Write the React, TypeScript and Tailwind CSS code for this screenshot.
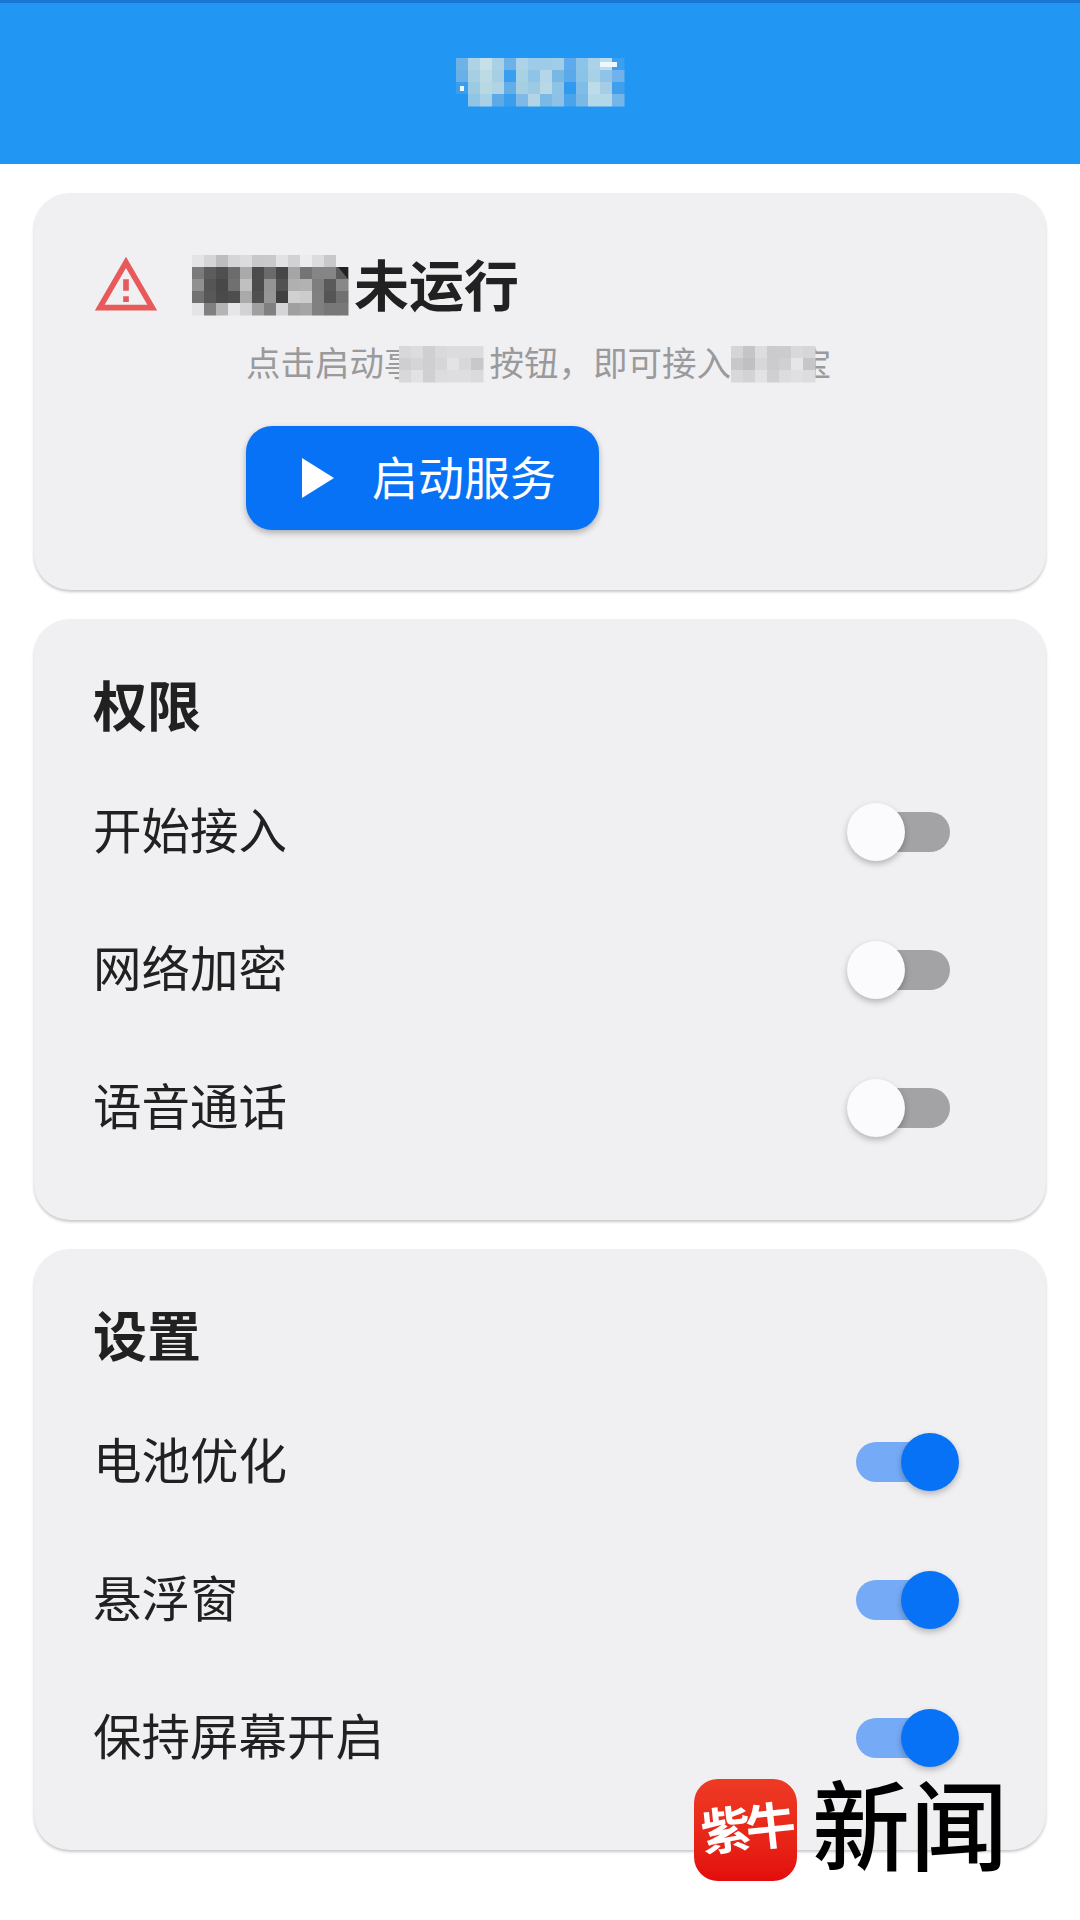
import React from "react";

const FONT = "font-['Roboto','Noto_Sans_CJK_SC',sans-serif]";

const TITLE_MOSAIC = [
  ["#6fb2e6", "#aed3e6", "#c6dfe8", "#a9d1e6", "#6cb2e8", "#aed3e8", "#9ecbe8", "#9ecbe8", "#a0cde8", "#5eaaea", "#8cc3e8", "#acd2e8", "#b8dcf0", "#3a9ff0"],
  ["#6ab0e8", "#a5cfe2", "#bcdbe4", "#a6cfe4", "#3a9eee", "#a9d1e4", "#8fc4e6", "#b5d6e8", "#7ab8e4", "#5aa9ea", "#8bc3e8", "#a8d0e6", "#8fc4e8", "#6fb3ea"],
  ["#3a9eee", "#9ccae0", "#b8d9e4", "#b0d4e4", "#64aee8", "#a6cfe2", "#9cc9e4", "#b8d8e6", "#8fc3e6", "#2f9af0", "#7fbce8", "#bcdce8", "#a5cee6", "#3f9fee"],
  ["#2196f3", "#90c5e6", "#a8d1e8", "#5caae8", "#3a9eee", "#7fbae6", "#b2d5e6", "#7ab8e6", "#8dc2e6", "#4aa4ec", "#7ab8e8", "#b5d8e8", "#b5d8e8", "#74b6e8"],
];

const HEADING_MOSAIC = [
  ["#e4e4e6", "#d5d5d7", "#bdbdbf", "#d5d5d7", "#dcdcde", "#c8c8ca", "#c9c9cb", "#e2e2e4", "#d2d2d4", "#ececee", "#dcdcde", "#c8c8ca", "#f0f0f3"],
  ["#7a7a7a", "#5c5c5c", "#4f4f4f", "#6c6c6c", "#aaaaaa", "#4b4b4b", "#6a6a6a", "#474747", "#a5a5a5", "#747474", "#858585", "#858585", "#5c5c5c"],
  ["#909090", "#555555", "#484848", "#707070", "#c0c0c0", "#4c4c4c", "#949494", "#525252", "#b0b0b0", "#b2b2b2", "#7e7e7e", "#5a5a5a", "#888888"],
  ["#727272", "#585858", "#4a4a4a", "#4e4e4e", "#aaaaaa", "#505050", "#969696", "#404040", "#d0d0d0", "#cccccc", "#808080", "#555555", "#707070"],
  ["#e4e4e6", "#808080", "#b5b5b5", "#e6e6e8", "#d2d2d4", "#a0a0a0", "#808080", "#d5d5d7", "#a0a0a0", "#a5a5a5", "#808080", "#787878", "#787878"],
];

const SUB_MOSAIC_A = [
  ["#d8d8da", "#dcdcde", "#cfcfd1", "#d9d9db", "#dcdcde", "#dcdcde", "#dcdcde"],
  ["#cfcfd1", "#d5d5d7", "#cfcfd1", "#d6d6d8", "#e3e3e5", "#d8d8da", "#c8c8ca"],
  ["#d8d8da", "#e2e2e4", "#d0d0d2", "#dcdcde", "#dedee0", "#dedee0", "#dadadc"],
];

const SUB_MOSAIC_B = [
  ["#d5d5d7", "#c5c5c7", "#dddddf", "#cbcbcd", "#ccccce", "#d9d9db", "#d6d6d8"],
  ["#c8c8ca", "#c0c0c2", "#d7d7d9", "#ccccce", "#d0d0d2", "#e6e6e8", "#c6c6c8"],
  ["#d8d8da", "#d3d3d5", "#e2e2e4", "#d0d0d2", "#dcdcde", "#e0e0e2", "#dddddf"],
];

const Mosaic = ({ rows, className, children }: { rows: string[][]; className?: string; children?: React.ReactNode }) => (
  <svg
    width={rows[0].length * 12}
    height={rows.length * 12}
    viewBox={`0 0 ${rows[0].length * 12} ${rows.length * 12}`}
    className={`overflow-visible ${className ?? ""}`}
  >
    {rows.map((row, y) =>
      row.map((fill, x) => <rect key={x} x={x * 12} y={y * 12} width="12.5" height="12.5" fill={fill} />)
    )}
    {children}
  </svg>
);

const Switch = ({ on }: { on: boolean }) => (
  <div className={`relative w-[94px] h-[40px] rounded-full mr-[36px] ${on ? "bg-[#75abf6]" : "bg-[#a3a3a5]"}`}>
    <div
      className={`absolute top-[-9px] w-[58px] h-[58px] rounded-full shadow-[0_3px_6px_rgba(0,0,0,0.25)] ${
        on ? "right-[-9px] bg-[#0872f6]" : "left-[-9px] bg-[#fbfbfd]"
      }`}
    />
  </div>
);

const Section = ({ title, items, on }: { title: string; items: string[]; on: boolean }) => (
  <div className="bg-[#f0f0f3] rounded-[36px] shadow-[0_2px_3px_rgba(0,0,0,0.22)] pl-[59px] pr-[60px] pt-[60px] pb-[43px]">
    <h2 className="h-[60px] leading-[60px] text-[54px] font-bold text-[#212121]">{title}</h2>
    <div className="mt-[24px] flex flex-col">
      {items.map((item) => (
        <div key={item} className="h-[138px] flex items-center justify-between">
          <span className="text-[48.5px] leading-[60px] pt-[2px] text-[#212121]">{item}</span>
          <Switch on={on} />
        </div>
      ))}
    </div>
  </div>
);

export default function App() {
  return (
    <div className={`relative w-[1080px] h-[1920px] bg-white overflow-hidden ${FONT}`}>
      <header className="h-[164px] bg-[#2196f3] border-t-[3px] border-[#1976d2] flex items-center justify-center">
        <Mosaic rows={TITLE_MOSAIC} className="mt-[-3px]">
          <rect x="144" y="4" width="17" height="5" fill="#eef8fc" />
          <rect x="4" y="28" width="4" height="5" fill="#eef8fc" />
        </Mosaic>
      </header>

      <main className="px-[34px] pt-[29px] flex flex-col gap-[29px]">
        <div className="bg-[#f0f0f3] rounded-[36px] shadow-[0_2px_3px_rgba(0,0,0,0.22)] pl-[60px] pr-[60px] pt-[64px] pb-[60px]">
          <div className="h-[56px] flex items-center">
            <svg viewBox="0 0 24 24" className="w-[68px] h-[68px] -ml-[2px] shrink-0 fill-[#e85a5a]">
              <path d="M12 5.99L19.53 19H4.47L12 5.99M12 2L1 21h22L12 2zm1 14h-2v2h2v-2zm0-6h-2v4h2v-4z" />
            </svg>
            <Mosaic rows={HEADING_MOSAIC} className="ml-[32px] shrink-0">
              <polygon points="146,12 156,12 156,24" fill="#222222" />
            </Mosaic>
            <span className="ml-[6px] pt-[4px] text-[55px] font-bold text-[#212121] whitespace-nowrap">未运行</span>
          </div>

          <div className="mt-[27px] ml-[152px] h-[48px] flex items-center text-[34.5px] text-[#9a9a9c] whitespace-nowrap">
            <span className="pt-[2px]">点击启动事</span>
            <Mosaic rows={SUB_MOSAIC_A} className="relative -ml-[20px] mr-[7px] shrink-0" />
            <span className="pt-[2px]">按钮，即可接入</span>
            <Mosaic rows={SUB_MOSAIC_B} className="relative z-10 -mr-[18px] shrink-0" />
            <span className="pt-[2px]">宝</span>
          </div>

          <button className="mt-[38px] ml-[152px] w-[353px] h-[104px] rounded-[26px] bg-[#0872f6] shadow-[0_3px_6px_rgba(0,0,0,0.28)] flex items-center pl-[56px]">
            <svg viewBox="0 0 32 40" className="w-[32px] h-[40px] fill-white">
              <polygon points="0,0 32,20 0,40" />
            </svg>
            <span className="ml-[38px] pt-[2px] text-[46px] text-white whitespace-nowrap">启动服务</span>
          </button>
        </div>

        <Section title="权限" items={["开始接入", "网络加密", "语音通话"]} on={false} />
        <Section title="设置" items={["电池优化", "悬浮窗", "保持屏幕开启"]} on={true} />
      </main>

      {/* watermark */}
      <div className="absolute left-[694px] top-[1779px] flex items-start">
        <div className="w-[103px] h-[102px] rounded-[24px] bg-gradient-to-b from-[#ee3a24] to-[#e30c0c] flex items-center justify-center">
          <span className="text-[50px] leading-none font-bold text-white tracking-[-5px] whitespace-nowrap -rotate-6">紫牛</span>
        </div>
        <span className="ml-[15px] mt-[2px] text-[98px] leading-none font-medium text-black whitespace-nowrap">新闻</span>
      </div>
    </div>
  );
}
